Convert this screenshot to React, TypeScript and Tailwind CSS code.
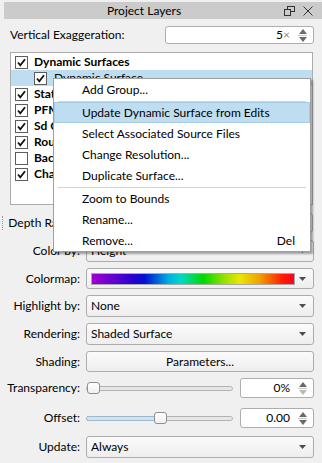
import React from 'react';

const Check = ({ on = true }: { on?: boolean }) => (
  <div className="flex h-[13px] w-[13px] shrink-0 items-center justify-center border border-[#5d5d5d] bg-white">
    {on && (
      <svg width="11" height="11" viewBox="0 0 11 11">
        <path d="M2 5.5 L4.3 8.3 L9 2.2" fill="none" stroke="#111" strokeWidth="1.8" />
      </svg>
    )}
  </div>
);

const Arrow = () => (
  <svg width="7" height="4" viewBox="0 0 7 4">
    <path d="M0 0h7L3.5 4z" fill="#4f4f4f" />
  </svg>
);

const Combo = ({ text, children }: { text?: string; children?: React.ReactNode }) => (
  <div className="flex h-full flex-1 items-center rounded-[3px] border border-[#adadad] bg-linear-to-b from-[#fbfbfb] to-[#eeeeee] pl-[4px] pr-[7px]">
    <div className="flex-1">{children ?? text}</div>
    <Arrow />
  </div>
);

const SpinArrows = ({ downOff = false }: { downOff?: boolean }) => (
  <div className="flex w-[15px] flex-col items-center gap-[1px]">
    <svg width="8" height="5" viewBox="0 0 8 5">
      <path d="M0 5h8L4 0z" fill="#6a6a6a" />
    </svg>
    <div className="h-[1px] w-[9px] bg-[#c9c9c9]" />
    <svg width="8" height="5" viewBox="0 0 8 5">
      <path d="M0 0h8L4 5z" fill={downOff ? '#b9b9b9' : '#6a6a6a'} />
    </svg>
  </div>
);

const Spin = ({ value, unit, downOff }: { value: string; unit?: string; downOff?: boolean }) => (
  <div className="flex h-full items-center rounded-[3px] border border-[#adadad] bg-white pr-[3px]">
    <div className="flex-1 pr-[5px] text-right">
      {value}
      {unit && <span className="text-[#8a8a8a]">{unit}</span>}
    </div>
    <SpinArrows downOff={downOff} />
  </div>
);

const Slider = ({ pos, fill }: { pos: number; fill?: boolean }) => (
  <div className="relative flex h-[14px] flex-1 items-center">
    <div className="h-[5px] w-full rounded-full border border-[#b3b3b3] bg-[#e6e6e6]" />
    {fill && (
      <div
        className="absolute left-0 h-[5px] rounded-full border border-[#9fb8cc] bg-[#cfe4f3]"
        style={{ width: pos + 4 }}
      />
    )}
    <div
      className="absolute top-[1px] h-[12px] w-[13px] rounded-[3px] border border-[#8f8f8f] bg-linear-to-b from-white to-[#f0f0f0]"
      style={{ left: pos }}
    />
  </div>
);

const Row = ({ label, children, h = 'h-[22px]' }: { label: string; children: React.ReactNode; h?: string }) => (
  <div className={`flex shrink-0 items-center ${h}`}>
    <div className="w-[80px] shrink-0 text-right">{label}</div>
    <div className="ml-[6px] mr-[8px] flex h-full flex-1 items-center gap-[7px]">{children}</div>
  </div>
);

const layers = ['Static Surfaces', 'PFM Surfaces', 'Sd Grids', 'Routes', 'Background Maps', 'Charts'];

const MenuItem = ({ text, hot, shortcut }: { text: string; hot?: boolean; shortcut?: string }) => (
  <div
    className={`flex h-[21px] items-center pl-[27px] pr-[14px] ${
      hot ? 'border border-[#a6cde8] bg-[#bfddf1]' : 'border border-transparent'
    }`}
  >
    <span className="flex-1">{text}</span>
    {shortcut && <span>{shortcut}</span>}
  </div>
);

const Sep = () => (
  <div className="flex h-[2px] items-center px-[4px]">
    <div className="h-[1px] w-full bg-[#d4d4d4]" />
  </div>
);

export default function App() {
  return (
    <div className="relative h-[463px] w-[322px] overflow-hidden bg-[#f0f0f0] font-['Lato',sans-serif] text-[12px] leading-none text-black">
      {/* title bar */}
      <div className="ml-[4px] mt-[2px] flex h-[17px] items-center bg-[#cbcbcb]">
        <div className="flex-1 text-center">Project Layers</div>
        <div className="flex items-center gap-[8px] pr-[9px]">
          <svg width="11" height="10" viewBox="0 0 11 10">
            <rect x="3.5" y="0.5" width="7" height="5" fill="none" stroke="#333" />
            <rect x="0.5" y="3.5" width="6" height="6" fill="#cbcbcb" stroke="#333" />
          </svg>
          <svg width="10" height="10" viewBox="0 0 10 10">
            <path d="M0.5 0.5L9.5 9.5M9.5 0.5L0.5 9.5" stroke="#333" strokeWidth="1" />
          </svg>
        </div>
      </div>

      {/* vertical exaggeration */}
      <div className="mt-[7px] flex h-[18px] items-center pl-[10px] pr-[8px]">
        <span>Vertical Exaggeration:</span>
        <div className="ml-auto h-full w-[149px]">
          <Spin value="5" unit="×" />
        </div>
      </div>

      {/* layer tree */}
      <div className="ml-[10px] mt-[8px] h-[153px] w-[303px] border border-[#acacac] bg-white pt-[1px]">
        <div className="flex h-[16px] items-center gap-[6px] pl-[4px] font-bold">
          <Check />
          <span>Dynamic Surfaces</span>
        </div>
        <div className="flex h-[16px] items-center gap-[7px] bg-[#bfddf0] pl-[23px]">
          <Check />
          <span>Dynamic Surface</span>
        </div>
        {layers.map((l, i) => (
          <div key={l} className="flex h-[16px] items-center gap-[6px] pl-[4px] font-bold">
            <Check on={i !== 4} />
            <span>{l}</span>
          </div>
        ))}
      </div>

      {/* properties */}
      <div className="mt-[7px] flex flex-col">
        <div className="flex h-[22px] items-center">
          <div className="flex w-[80px] shrink-0 items-center">
            <div className="ml-[2px] h-[14px] w-0 border-l border-dotted border-[#9a9a9a]" />
            <div className="flex-1 text-right">Depth Range:</div>
          </div>
          <div className="ml-[6px] mr-[9px] flex h-[20px] flex-1">
            <Combo text="Off" />
          </div>
        </div>
        <div className="mt-[6px]">
          <Row label="Color by:">
            <Combo text="Height" />
          </Row>
        </div>
        <div className="mt-[6px]">
          <Row label="Colormap:" h="h-[21px]">
            <Combo>
              <div className="mr-[4px] h-[12px] border border-[#a8a8a8]">
                <div className="h-full w-full bg-[linear-gradient(to_right,#a000d0_0%,#2a00d0_20%,#0010d0_26%,#00b0e0_38%,#00d8c8_44%,#00d800_55%,#a0e000_66%,#e8e800_73%,#f0a000_83%,#ff2000_94%,#ff0020_100%)]" />
              </div>
            </Combo>
          </Row>
        </div>
        <div className="mt-[6px]">
          <Row label="Highlight by:">
            <Combo text="None" />
          </Row>
        </div>
        <div className="mt-[6px]">
          <Row label="Rendering:">
            <Combo text="Shaded Surface" />
          </Row>
        </div>
        <div className="mt-[6px]">
          <Row label="Shading:" h="h-[21px]">
            <div className="flex h-full flex-1 items-center justify-center rounded-[3px] border border-[#adadad] bg-linear-to-b from-[#fbfbfb] to-[#eeeeee]">
              Parameters...
            </div>
          </Row>
        </div>
        <div className="mt-[6px]">
          <Row label="Transparency:" h="h-[20px]">
            <Slider pos={1} />
            <div className="h-full w-[74px]">
              <Spin value="0%" downOff />
            </div>
          </Row>
        </div>
        <div className="mt-[10px]">
          <Row label="Offset:" h="h-[20px]">
            <Slider pos={68} fill />
            <div className="h-full w-[74px]">
              <Spin value="0.00" />
            </div>
          </Row>
        </div>
        <div className="mt-[8px]">
          <Row label="Update:">
            <Combo text="Always" />
          </Row>
        </div>
      </div>

      {/* context menu */}
      <div className="absolute left-[53px] top-[78px] w-[258px] border border-[#a0a0a0] bg-white shadow-[2px_2px_2px_rgba(0,0,0,0.35)]">
        <MenuItem text="Add Group..." />
        <Sep />
        <MenuItem text="Update Dynamic Surface from Edits" hot />
        <MenuItem text="Select Associated Source Files" />
        <MenuItem text="Change Resolution..." />
        <MenuItem text="Duplicate Surface..." />
        <Sep />
        <MenuItem text="Zoom to Bounds" />
        <MenuItem text="Rename..." />
        <MenuItem text="Remove..." shortcut="Del" />
      </div>
    </div>
  );
}
